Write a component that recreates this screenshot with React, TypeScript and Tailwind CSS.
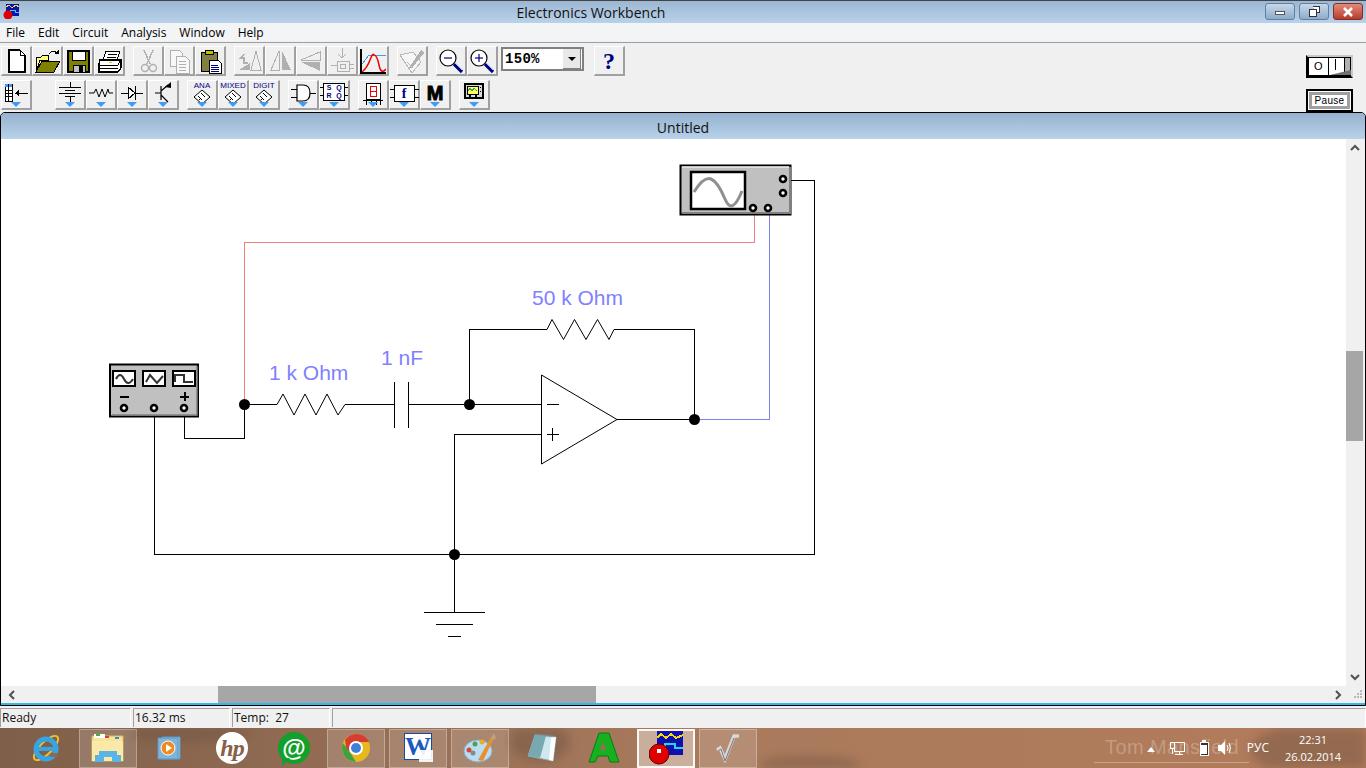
import type { ReactNode } from "react";

const ui = { fontFamily: '"Liberation Sans", Arial, sans-serif' };

function Svg({ children, w = 26, h = 26 }: { children: ReactNode; w?: number; h?: number }) {
  return (
    <svg width={w} height={h} viewBox={`0 0 ${w} ${h}`} shapeRendering="crispEdges" fill="none">
      {children}
    </svg>
  );
}

function Btn({ children, drop = false, cls = "" }: { children: ReactNode; drop?: boolean; cls?: string }) {
  return (
    <div className={`relative w-[31px] h-[30px] shrink-0 bg-[#f0f0f0] border-t border-l border-t-white border-l-white border-r-2 border-b-2 border-r-[#a0a0a0] border-b-[#a0a0a0] flex items-start justify-center pt-[1px] ${cls}`}>
      {children}
      {drop && <div className="absolute bottom-[1px] left-[9px] w-0 h-0 border-l-[5px] border-r-[5px] border-t-[5px] border-l-transparent border-r-transparent border-t-[#3f9bf5]" />}
    </div>
  );
}

const NewIcon = () => (
  <Svg><path d="M6 2H17L22 7V24H6Z" fill="#fff" stroke="#000" strokeWidth="1.4" /><path d="M17 2V7H22" stroke="#000" /></Svg>
);
const OpenIcon = () => (
  <Svg>
    <path d="M2 9H7L9 7H14V12H6L2 24Z" fill="#ffff80" stroke="#000" />
    <path d="M2 24L8 13H26L20 24Z" fill="#808000" stroke="#000" />
    <path d="M15 6Q19 1 23 5" stroke="#000" strokeWidth="1.2" /><path d="M20 6H25V2Z" fill="#000" />
  </Svg>
);
const SaveIcon = () => (
  <Svg>
    <path d="M3 3H24V24H3Z" fill="#808000" stroke="#000" strokeWidth="1.4" />
    <path d="M7 3H20V12H7Z" fill="#fff" stroke="#000" />
    <path d="M8 17H20V24H8Z" fill="#c0c0c0" stroke="#000" /><path d="M14 18H18V24H14Z" fill="#000" />
  </Svg>
);
const PrintIcon = () => (
  <Svg>
    <path d="M10 3H24L21 12H7Z" fill="#fff" stroke="#000" />
    <path d="M12 6H21M11 9H20" stroke="#000" />
    <path d="M4 12H25V20L22 24H3V16Z" fill="#fff" stroke="#000" strokeWidth="1.3" />
    <path d="M3 17H22L25 12M3 20H22" stroke="#000" /><path d="M13 14H16V15H13Z" fill="#d0c020" />
  </Svg>
);
const CutIcon = () => (
  <Svg>
    <path d="M9 2L15 16M18 2L12 16" stroke="#b0b0b0" strokeWidth="1.4" />
    <circle cx="10" cy="20" r="3.5" stroke="#b0b0b0" strokeWidth="1.4" shapeRendering="auto" /><circle cx="18" cy="20" r="3.5" stroke="#b0b0b0" strokeWidth="1.4" shapeRendering="auto" />
  </Svg>
);
const CopyIcon = () => (
  <Svg>
    <path d="M4 2H13L16 5V18H4Z" fill="#f8f8f8" stroke="#b0b0b0" />
    <path d="M10 8H19L23 12V25H10Z" fill="#f8f8f8" stroke="#b0b0b0" />
    <path d="M13 13H20M13 16H20M13 19H20M13 22H20" stroke="#b0b0b0" />
  </Svg>
);
const PasteIcon = () => (
  <Svg>
    <path d="M4 4H20V23H4Z" fill="#808040" stroke="#000" />
    <path d="M8 2H16V6H8Z" fill="#c0c000" stroke="#000" />
    <path d="M12 12H21L24 15V25H12Z" fill="#fff" stroke="#000" />
    <path d="M14 17H21M14 19H22M14 21H22M14 23H22" stroke="#000080" />
  </Svg>
);
const RotIcon = () => (
  <Svg>
    <path d="M3 22L14 15V22Z" fill="#b0b0b0" /><path d="M15 22L20 3L25 22Z" fill="#f0f0f0" stroke="#b0b0b0" />
    <path d="M9 6L5 10H8V15H12" stroke="#b0b0b0" strokeWidth="1.4" />
  </Svg>
);
const FlipHIcon = () => (
  <Svg><path d="M12 3V22H4Z" fill="#f0f0f0" stroke="#b0b0b0" /><path d="M15 3V22H24Z" fill="#b0b0b0" /></Svg>
);
const FlipVIcon = () => (
  <Svg><path d="M22 4V12H3Z" fill="#f0f0f0" stroke="#b0b0b0" /><path d="M22 23V14H3Z" fill="#b0b0b0" /></Svg>
);
const SubIcon = () => (
  <Svg><path d="M13 0V9M9 6L13 10L17 6" stroke="#b0b0b0" /><path d="M2 17H8M8 13H20V23H8ZM20 16H25M20 20H25" stroke="#b0b0b0" /><path d="M11 16H16V20H11Z" stroke="#b0b0b0" /></Svg>
);
const GraphIcon = () => (
  <Svg>
    <path d="M1 1V25H27" stroke="#000" strokeWidth="1.2" />
    <path d="M2 16L9 7H26" stroke="#3f9bf5" />
    <path d="M2 24Q7 20 10 12T14 7Q17 7 19 17T26 21" stroke="#ee0000" strokeWidth="1.5" shapeRendering="auto" />
  </Svg>
);
const TagIcon = () => (
  <Svg>
    <path d="M1 7L14 4L22 14L13 25Z" fill="#f6f6f6" stroke="#b8b8b8" />
    <path d="M10 20L22 2L25 5L13 20Z" fill="#b0b0b0" /><path d="M8 14L14 20" stroke="#b8b8b8" />
  </Svg>
);
const Zoom = ({ plus }: { plus?: boolean }) => (
  <svg width="26" height="26" viewBox="0 0 26 26" fill="none">
    <circle cx="10" cy="10" r="8" fill="#fff" stroke="#000" strokeWidth="1.2" />
    <path d="M6 10H14" stroke="#000080" strokeWidth="1.2" />
    {plus && <path d="M10 6V14" stroke="#000080" strokeWidth="1.2" />}
    <path d="M16 16L24 24" stroke="#000080" strokeWidth="3.2" />
    <path d="M17 15L24 22" stroke="#9fc0ff" strokeWidth="1" />
  </svg>
);
const PartsIcon = () => (
  <Svg w={26} h={22}>
    <path d="M2 2H9V19H2Z" fill="#fff" stroke="#000" />
    <path d="M2 2H9V5H2Z" fill="#3f9bf5" /><path d="M2 8H9M2 11H9M2 14H9M5 2V19" stroke="#000" />
    <path d="M12 11H25" stroke="#000" /><path d="M12 11L16 8V14Z" fill="#000" />
  </Svg>
);
const SourceIcon = () => (
  <Svg w={26} h={22}><path d="M13 0V5M2 5H24M8 8H18M2 11H24M8 14H18M13 14V20" stroke="#000" /></Svg>
);
const ResIcon = () => (
  <svg width="26" height="22" viewBox="0 0 26 22" fill="none"><path d="M1 11H6L8 7L11 15L14 7L17 15L20 7L21 11H25" stroke="#000" /></svg>
);
const DiodeIcon = () => (
  <Svg w={24} h={22}><path d="M1 11H9M16 11H23M15 4V18" stroke="#000" /><path d="M8 5V17L15 11Z" fill="#fff" stroke="#000" /></Svg>
);
const TransIcon = () => (
  <svg width="24" height="22" viewBox="0 0 24 22" fill="none">
    <path d="M4 11H10M10 4V18M10 9L17 3M10 13L17 20" stroke="#000" strokeWidth="1.2" />
    <path d="M14 5L20 0V6Z" fill="#000" />
  </svg>
);
const ChipIcon = ({ label }: { label: string }) => (
  <div className="flex flex-col items-center leading-none">
    <span className="text-[8px] text-[#000080] h-[7px] leading-[7px] whitespace-nowrap" style={ui}>{label}</span>
    <svg width="18" height="16" viewBox="0 0 18 16" fill="none">
      <path d="M9 1L17 8L9 15L1 8Z" fill="#fff" stroke="#000" />
      <path d="M5 7L9 11M8 4L12 8" stroke="#000" /><path d="M6 10H7V11H6Z" fill="#000" />
    </svg>
  </div>
);
const GateIcon = () => (
  <Svg w={28} h={22}><path d="M2 7H8M2 15H8M20 11H27" stroke="#000" /><path d="M8 3H14Q21 3 21 11T14 19H8Z" fill="#fff" stroke="#000" strokeWidth="1.2" shapeRendering="auto" /></Svg>
);
const SrIcon = () => (
  <div className="relative mt-[1px] w-[22px] h-[18px] border border-black bg-white grid grid-cols-2 text-[7px] leading-[8px] text-center font-bold text-[#000080]" style={ui}>
    <span>S</span><span>Q</span><span>R</span><span>Q</span>
    <div className="absolute left-[-4px] top-[3px] w-[3px] h-[1px] bg-black" />
    <div className="absolute left-[-4px] top-[11px] w-[3px] h-[1px] bg-black" />
    <div className="absolute right-[-4px] top-[3px] w-[3px] h-[1px] bg-black" />
    <div className="absolute right-[-4px] top-[11px] w-[3px] h-[1px] bg-black" />
  </div>
);
const SegIcon = () => (
  <Svg w={22} h={24}>
    <path d="M4 1H18V17H4Z" fill="#fff" stroke="#000" />
    <path d="M8 4H14V14H8ZM8 9H14" stroke="#ee0000" />
    <path d="M1 18H21V19H1Z" fill="#000" /><path d="M4 19V23M9 19V23M14 19V23M18 19V23" stroke="#000" />
  </Svg>
);
const FuncIcon = () => (
  <div className="relative mt-[3px] w-[21px] h-[17px] border border-black bg-white flex items-center justify-center">
    <span className="text-[14px] font-bold text-[#000080] leading-none" style={{ fontFamily: '"Liberation Serif", serif' }}>f</span>
    <div className="absolute left-[-5px] top-[3px] w-[4px] h-[1px] bg-black" />
    <div className="absolute right-[-5px] top-[3px] w-[4px] h-[1px] bg-black" />
    <div className="absolute left-[-5px] top-[11px] w-[4px] h-[1px] bg-black" />
    <div className="absolute right-[-5px] top-[11px] w-[4px] h-[1px] bg-black" />
  </div>
);
const ScopeTool = () => (
  <Svg w={20} h={20}>
    <path d="M1 2H19V16H1Z" fill="#d8d8d8" stroke="#000" strokeWidth="1.3" />
    <path d="M3 4H14V12H3Z" fill="#ffff60" stroke="#000" />
    <path d="M4 9L6 6L8 9L10 6L13 9" stroke="#3fa060" />
    <path d="M16 5H17V6H16ZM16 9H17V10H16ZM5 13H7V15H5ZM11 13H13V15H11Z" fill="#000" />
  </Svg>
);

function Toolbar() {
  return (
    <div className="h-[69px] bg-[#f0f0f0] flex justify-between" style={ui}>
      <div className="flex flex-col pt-[3px]">
        <div className="flex items-start pl-[1px] h-[34px]">
          <Btn><NewIcon /></Btn><Btn><OpenIcon /></Btn><Btn><SaveIcon /></Btn><Btn><PrintIcon /></Btn>
          <div className="w-[8px]" />
          <Btn><CutIcon /></Btn><Btn><CopyIcon /></Btn><Btn><PasteIcon /></Btn>
          <div className="w-[8px]" />
          <Btn><RotIcon /></Btn><Btn><FlipHIcon /></Btn><Btn><FlipVIcon /></Btn><Btn><SubIcon /></Btn><Btn><GraphIcon /></Btn>
          <div className="w-[8px]" />
          <Btn><TagIcon /></Btn>
          <div className="w-[8px]" />
          <Btn><Zoom /></Btn><Btn><Zoom plus /></Btn>
          <div className="ml-[3px] mt-[1px] w-[83px] h-[24px] bg-white border-2 border-[#808080] flex justify-between items-center">
            <span className="pl-[2px] text-[14px] font-bold text-black tracking-[0.3px]" style={{ fontFamily: '"Liberation Mono", monospace' }}>150%</span>
            <div className="mr-[1px] w-[18px] h-[20px] bg-[#e8e8e8] border-r border-b border-[#808080] flex items-center justify-center">
              <div className="w-0 h-0 border-l-[4px] border-r-[4px] border-t-[4px] border-l-transparent border-r-transparent border-t-black" />
            </div>
          </div>
          <div className="w-[10px]" />
          <Btn><span className="text-[24px] leading-[26px] font-bold text-[#000080]" style={{ fontFamily: '"Liberation Serif", serif' }}>?</span></Btn>
        </div>
        <div className="flex items-start pl-[1px] h-[32px]">
          <Btn drop><PartsIcon /></Btn>
          <div className="w-[23px]" />
          <Btn drop><SourceIcon /></Btn><Btn drop><ResIcon /></Btn><Btn drop><DiodeIcon /></Btn><Btn drop><TransIcon /></Btn>
          <div className="w-[8px]" />
          <Btn drop><ChipIcon label="ANA" /></Btn><Btn drop><ChipIcon label="MIXED" /></Btn><Btn drop><ChipIcon label="DIGIT" /></Btn>
          <div className="w-[8px]" />
          <Btn drop><GateIcon /></Btn><Btn drop><SrIcon /></Btn>
          <div className="w-[8px]" />
          <Btn drop><SegIcon /></Btn><Btn drop><FuncIcon /></Btn>
          <Btn drop><span className="text-[20px] leading-[22px] font-bold text-black [-webkit-text-stroke:1px_#000]" style={ui}>M</span></Btn>
          <div className="w-[8px]" />
          <Btn drop><ScopeTool /></Btn>
        </div>
      </div>
      <div className="flex flex-col items-end pr-[13px] pt-[12px]">
        <div className="w-[47px] h-[23px] border-2 border-black border-t-[#c8c8c8] border-r-[#c8c8c8] bg-black p-[1px] flex gap-[1px]">
          <div className="w-[19px] bg-white flex items-center justify-center text-[11px] leading-none text-black">O</div>
          <div className="relative w-[22px] bg-white">
            <div className="absolute left-[6px] top-[1px] w-[1px] h-[11px] bg-black" />
            <div className="absolute right-0 top-0 w-[6px] h-full bg-[#b0b0b0] border-l border-black" />
            <svg className="absolute left-0 bottom-0" width="22" height="6" viewBox="0 0 22 6"><path d="M1 6L22 1V6Z" fill="#707070" /></svg>
          </div>
        </div>
        <div className="mt-[11px] w-[47px] h-[23px] border-2 border-black bg-white p-[1px]">
          <div className="h-full border-[3px] border-[#a0a0a0] flex items-center justify-center text-[10px] leading-none text-black tracking-[0.3px]">Pause</div>
        </div>
      </div>
    </div>
  );
}

const Wire = ({ d, c = "#000" }: { d: string; c?: string }) => <path d={d} stroke={c} fill="none" shapeRendering="crispEdges" />;
const Dot = ({ x, y }: { x: number; y: number }) => <circle cx={x} cy={y} r="5.5" fill="#000" />;
const Port = ({ x, y }: { x: number; y: number }) => <circle cx={x} cy={y} r="3" fill="#fff" stroke="#000" strokeWidth="2.6" />;

// the drawing uses page coordinates, viewBox starts where the canvas does
function Circuit() {
  const label = { fontFamily: '"Liberation Sans", Arial, sans-serif', fontSize: 21, fill: "#7f7fff" };
  return (
    <svg className="block shrink-0" width="1344" height="547" viewBox="2 139 1344 547">
      <Wire d="M244.500 404V242.500H754.500V213" c="#f08080" />
      <Wire d="M695 419.500H769.500V213" c="#8080ee" />
      <Wire d="M184.500 416V438.500H244.500V404" />
      <Wire d="M154.500 416V554.500H814.500V180.500H791" />
      <Wire d="M454.500 554V434.500H541M454.500 554V612M424 612.500H485M436 624.500H473M448 636.500H461" />
      <Wire d="M245 404.500H277M345 404.500H394M394.500 382V428M408.500 382V428M408 404.500H541M469.500 404V329.500H547M614 329.500H694.500V419M617 419.500H695" />
      <path d="M277 404.500L283 394L294 415L305 394L316 415L327 394L338 415L345 404.500" stroke="#000" fill="none" />
      <path d="M547 329.500L552 319.500L563.500 339.500L574.500 319.500L586 339.500L597.500 319.500L609 339.500L614 329.500" stroke="#000" fill="none" />
      <path d="M541.500 375L617 419.500L541.500 464Z" fill="#fff" stroke="#000" />
      <path d="M547 404.500H559M547 434.500H559M552.500 428V441" stroke="#000" shapeRendering="crispEdges" />
      <Dot x={244.5} y={404.5} /><Dot x={469.5} y={404.5} /><Dot x={694.5} y={419.5} /><Dot x={454.5} y={554.5} />
      <text x="269" y="380" style={label}>1 k Ohm</text>
      <text x="381" y="365" style={label}>1 nF</text>
      <text x="532" y="305" style={label}>50 k Ohm</text>

      {/* function generator */}
      <rect x="110" y="364.500" width="88" height="52" fill="#c0c0c0" stroke="#000" strokeWidth="2" />
      <path d="M112 415H197V366" stroke="#808080" strokeWidth="1.5" fill="none" />
      <rect x="113" y="371" width="22" height="15" fill="#fff" stroke="#000" strokeWidth="2" />
      <rect x="143" y="371" width="22" height="15" fill="#fff" stroke="#000" strokeWidth="2" />
      <rect x="173" y="371" width="22" height="15" fill="#fff" stroke="#000" strokeWidth="2" />
      <path d="M116 379Q120 371 124 379T133 379" stroke="#333" strokeWidth="2" fill="none" />
      <path d="M146 382L150 375L157 383L163 376" stroke="#333" strokeWidth="2" fill="none" />
      <path d="M175 382V375H184V382H193" stroke="#333" strokeWidth="2" fill="none" />
      <path d="M120 396.500H129M180 396.500H189M184.500 392V401" stroke="#000" strokeWidth="2" shapeRendering="crispEdges" />
      <Port x={124} y={408} /><Port x={154} y={408} /><Port x={184} y={408} />

      {/* oscilloscope */}
      <rect x="680.500" y="165.500" width="110" height="49" fill="#c0c0c0" stroke="#000" strokeWidth="2" />
      <path d="M682 213H790V167" stroke="#808080" strokeWidth="2" fill="none" />
      <path d="M682 167H789" stroke="#e8e8e8" strokeWidth="1.5" />
      <rect x="691" y="172" width="54" height="37" fill="#fff" stroke="#000" strokeWidth="2.5" />
      <path d="M694 192Q704 176 711 179T725 199T742 191" stroke="#909090" strokeWidth="3" fill="none" />
      <Port x={783} y={179} /><Port x={783} y={193} /><Port x={753} y={208} /><Port x={768} y={208} />
    </svg>
  );
}

function Document() {
  return (
    <div className="h-[594px] border border-black rounded-t-[5px] overflow-hidden bg-[#a9c4de]">
      <div className="h-[26px] pt-[2px] bg-gradient-to-b from-[#97b2cf] to-[#b8d2ea] flex items-center justify-center text-[14px] text-[#111]" style={{ fontFamily: '"Open Sans", sans-serif' }}>
        Untitled
      </div>
      <div className="flex h-[547px] pl-[1px] bg-white">
        <Circuit />
        <div className="flex-1 bg-[#f0f0f0] flex flex-col">
          <div className="h-[17px] w-[17px] flex items-center justify-center">
            <svg width="10" height="7" viewBox="0 0 10 7" fill="none"><path d="M1 6L5 2L9 6" stroke="#505050" strokeWidth="2" /></svg>
          </div>
          <div className="mt-[195px] h-[90px] w-[17px] bg-[#a6a6a6]" />
          <div className="flex-1" />
          <div className="h-[17px] w-[17px] flex items-center justify-center">
            <svg width="10" height="7" viewBox="0 0 10 7" fill="none"><path d="M1 1L5 5L9 1" stroke="#505050" strokeWidth="2" /></svg>
          </div>
        </div>
      </div>
      <div className="flex h-[17px] bg-[#f0f0f0] items-stretch">
        <div className="w-[20px] flex items-center justify-center">
          <svg width="7" height="10" viewBox="0 0 7 10" fill="none"><path d="M6 1L2 5L6 9" stroke="#505050" strokeWidth="2" /></svg>
        </div>
        <div className="ml-[197px] w-[378px] bg-[#a6a6a6]" />
        <div className="flex-1" />
        <div className="w-[30px] flex items-center justify-between pr-[2px]">
          <svg width="7" height="10" viewBox="0 0 7 10" fill="none"><path d="M1 1L5 5L1 9" stroke="#505050" strokeWidth="2" /></svg>
          <svg width="9" height="9" viewBox="0 0 9 9" fill="#b8b8b8" shapeRendering="crispEdges"><path d="M6 0H8V2H6ZM3 3H5V5H3ZM6 3H8V5H6ZM0 6H2V8H0ZM3 6H5V8H3ZM6 6H8V8H6Z" /></svg>
        </div>
      </div>
      <div className="h-[2px] bg-[#38b6e8]" />
    </div>
  );
}

function StatusBar() {
  const cell = "h-[19px] border-t border-l border-t-[#a0a0a0] border-l-[#a0a0a0] border-r border-r-white flex items-center pl-[1px] text-[12px] text-[#111] shrink-0";
  return (
    <div className="h-[22px] bg-[#f0f0f0] flex gap-[2px] items-start pt-[2px]" style={{ fontFamily: '"Open Sans", sans-serif' }}>
      <div className={`${cell} w-[131px]`}>Ready</div>
      <div className={`${cell} w-[97px]`}>16.32 ms</div>
      <div className={`${cell} w-[98px]`}>Temp:&nbsp; 27</div>
      <div className={`${cell} flex-1`} />
    </div>
  );
}

const IeIcon = () => (
  <svg width="34" height="34" viewBox="0 0 34 34" fill="none">
    <ellipse cx="17" cy="17" rx="16" ry="6" transform="rotate(-45 17 17)" stroke="#f0c030" strokeWidth="2" />
    <circle cx="17" cy="18" r="10" stroke="#35a5e5" strokeWidth="5" />
    <path d="M8 18H27" stroke="#35a5e5" strokeWidth="4" /><path d="M21 24H29" stroke="#8b6a52" strokeWidth="4" />
  </svg>
);
const FolderIcon = () => (
  <svg width="34" height="30" viewBox="0 0 34 30" fill="none">
    <path d="M1 3H32V28H1Z" fill="#f6e49c" stroke="#d8b860" />
    <path d="M3 1H14V5H3Z" fill="#fff" /><path d="M5 1H9V3H5Z" fill="#40b040" /><path d="M14 3H18V5H14Z" fill="#d04040" /><path d="M24 4H28V6H24Z" fill="#3090d0" />
    <path d="M1 8H32V28H1Z" fill="#fbe9a8" />
    <path d="M8 22V18H26V22H30V29H21V24H13V29H4V22Z" fill="#5ab4e6" />
  </svg>
);
const WmpIcon = () => (
  <svg width="28" height="26" viewBox="0 0 28 26" fill="none">
    <path d="M6 2H24V24H6Z" fill="#8fc4e8" stroke="#5d97c6" />
    <path d="M2 3H22V24H2Z" fill="#7fb4dc" stroke="#5d97c6" />
    <circle cx="12" cy="13" r="7" fill="#f08a1d" stroke="#fff" strokeWidth="1" />
    <path d="M10 9L16 13L10 17Z" fill="#fff" />
  </svg>
);
const HpIcon = () => (
  <div className="w-[32px] h-[32px] rounded-full bg-white flex items-center justify-center overflow-hidden">
    <span className="text-[24px] italic font-bold leading-none text-[#8a6048] tracking-[-1px]" style={{ fontFamily: '"Liberation Serif", serif' }}>hp</span>
  </div>
);
const MailIcon = () => (
  <div className="relative w-[32px] h-[32px] rounded-full bg-[#12a02a] flex items-center justify-center">
    <span className="text-[24px] font-bold leading-none text-white" style={ui}>@</span>
    <div className="absolute bottom-[-2px] left-[4px] w-0 h-0 border-t-[8px] border-r-[8px] border-t-[#12a02a] border-r-transparent" />
  </div>
);
const ChromeIcon = () => (
  <svg width="30" height="30" viewBox="0 0 30 30">
    <circle cx="15" cy="15" r="14" fill="#e8b820" />
    <path d="M15 1A14 14 0 0 1 28 9H15L6 20L4 7A14 14 0 0 1 15 1Z" fill="#d83c30" />
    <path d="M2 10L10 21L15 29A14 14 0 0 1 2 10Z" fill="#3fa044" />
    <circle cx="15" cy="15" r="7" fill="#fff" /><circle cx="15" cy="15" r="5" fill="#3f7fd8" />
  </svg>
);
const WordIcon = () => (
  <div className="relative w-[30px] h-[32px]">
    <div className="absolute left-[1px] top-[1px] w-[28px] h-[27px] bg-white border border-[#1a4aa0] flex justify-center">
      <span className="text-[26px] font-bold leading-[26px] text-[#1a5ac0]" style={{ fontFamily: '"Liberation Serif", serif' }}>W</span>
    </div>
    <div className="absolute right-0 bottom-[2px] w-[14px] h-[12px] bg-white/90" />
  </div>
);
const PaintIcon = () => (
  <svg width="34" height="32" viewBox="0 0 34 32">
    <ellipse cx="15" cy="19" rx="14" ry="11" fill="#bcdcf0" stroke="#7fb0d0" />
    <circle cx="6" cy="18" r="2.5" fill="#d04a3a" /><circle cx="12" cy="12" r="2.5" fill="#50a050" /><circle cx="19" cy="10" r="2.5" fill="#e8b020" /><circle cx="10" cy="21" r="2.5" fill="#888" />
    <path d="M15 28L27 7L30 8L20 29Z" fill="#e89030" /><path d="M27 7L31 1L33 6L30 8Z" fill="#c8a070" />
  </svg>
);
const NoteIcon = () => (
  <svg width="32" height="32" viewBox="0 0 32 32">
    <path d="M9 3L30 5L27 29L2 24Z" fill="#cfe8f0" stroke="#90a8b0" />
    <path d="M2 24L9 3L20 4L14 26Z" fill="#78a8b0" />
    <path d="M25 6L30 5L27 29L23 28Z" fill="#fff" />
    <path d="M9 2L29 4" stroke="#7a8a90" strokeWidth="2" strokeDasharray="1 1" />
  </svg>
);
const AIcon = () => (
  <svg width="32" height="34" viewBox="0 0 32 34">
    <path d="M11 2H21L31 31H22L20 25H10L7 31H1Z" fill="#16b020" stroke="#0a7a14" />
    <path d="M15 10L12 19H18Z" fill="#9a6c50" />
  </svg>
);
const EwbIcon = () => (
  <svg width="34" height="36" viewBox="0 0 34 36" shapeRendering="crispEdges">
    <rect x="8" y="1" width="26" height="24" fill="#1010b0" />
    <path d="M8 8L12 4L17 8L22 4L27 8L34 5" stroke="#f0e000" strokeWidth="2" fill="none" />
    <path d="M16 18V14H26V18H34" stroke="#20d8e8" strokeWidth="2" fill="none" />
    <circle cx="10" cy="24" r="10" fill="#e00000" shapeRendering="auto" stroke="#600000" />
    <rect x="8" y="19" width="4" height="4" fill="#fff" />
  </svg>
);
const SqrtIcon = () => (
  <svg width="26" height="30" viewBox="0 0 26 30" fill="none"><path d="M2 17L5 15L10 26L19 3H24" stroke="#d8d8d8" strokeWidth="3.5" /><path d="M3 18L6 16L10 28L19 5" stroke="#777" strokeWidth="1" /></svg>
);

function Slot({ children, box, active }: { children: ReactNode; box?: boolean; active?: boolean }) {
  const look = active ? "border-2 border-white/90 bg-white/40" : box ? "border border-white/30 bg-white/15" : "";
  return <div className={`w-[58px] h-[39px] flex items-center justify-center shrink-0 ${look}`}>{children}</div>;
}

function Taskbar() {
  return (
    <div className="relative h-[40px] bg-gradient-to-r from-[#7f5f4a] via-[#a87a5c] to-[#b37c5b] overflow-hidden flex items-center gap-[4px] pl-[17px] text-white" style={{ fontFamily: '"Open Sans", sans-serif' }}>
      <svg className="absolute left-0 top-0 blur-[5px]" width="1366" height="40" viewBox="0 0 1366 40" fill="#6f5443" opacity="0.45">
        <ellipse cx="190" cy="6" rx="60" ry="8" /><ellipse cx="540" cy="14" rx="30" ry="20" /><ellipse cx="810" cy="36" rx="50" ry="8" /><ellipse cx="1320" cy="22" rx="70" ry="26" />
      </svg>
      <Slot><span className="relative"><IeIcon /></span></Slot>
      <Slot box><span className="relative"><FolderIcon /></span></Slot>
      <Slot><span className="relative"><WmpIcon /></span></Slot>
      <Slot><span className="relative"><HpIcon /></span></Slot>
      <Slot><span className="relative"><MailIcon /></span></Slot>
      <Slot box><span className="relative"><ChromeIcon /></span></Slot>
      <Slot box><span className="relative"><WordIcon /></span></Slot>
      <Slot box><span className="relative"><PaintIcon /></span></Slot>
      <Slot><span className="relative"><NoteIcon /></span></Slot>
      <Slot><span className="relative"><AIcon /></span></Slot>
      <Slot active><span className="relative"><EwbIcon /></span></Slot>
      <Slot box><span className="relative"><SqrtIcon /></span></Slot>

      {/* watermark of the wallpaper */}
      <div className="absolute left-[1105px] top-[4px] text-[20px] tracking-[0.4px] text-white/25 whitespace-nowrap" style={ui}>Tom Mansfield</div>
      <div className="absolute left-[1094px] top-[34px] w-[155px] h-[1px] bg-white/30" />

      <div className="ml-auto relative flex items-center h-full text-[12px]">
        <div className="w-0 h-0 border-l-[4px] border-r-[4px] border-b-[5px] border-l-transparent border-r-transparent border-b-white mr-[14px] mt-[3px]" />
        <svg width="16" height="15" viewBox="0 0 16 15" fill="none" className="mr-[14px]" shapeRendering="crispEdges">
          <path d="M5 1H15V10H5Z" stroke="#fff" /><path d="M1 1H5V7H1ZM10 10V13M6 13.500H14M3 7V13" stroke="#fff" />
        </svg>
        <svg width="10" height="16" viewBox="0 0 10 16" fill="none" className="mr-[8px]" shapeRendering="crispEdges">
          <path d="M1 2H9V15H1Z" stroke="#fff" fill="#40302a" /><path d="M3 0H7V2H3Z" fill="#fff" /><path d="M2 5H8V14H2Z" fill="#fff" />
        </svg>
        <svg width="15" height="16" viewBox="0 0 15 16" fill="none" className="mr-[15px]">
          <path d="M1 5H4L8 1V15L4 11H1Z" fill="#fff" /><path d="M10 5Q12 8 10 11M12 3Q15 8 12 13" stroke="#fff" />
        </svg>
        <span className="mr-[8px] text-[12px]">РУС</span>
        <div className="w-[72px] mr-[17px] flex flex-col items-center leading-[17px] text-[11px]">
          <span>22:31</span>
          <span>26.02.2014</span>
        </div>
      </div>
    </div>
  );
}

export default function App() {
  return (
    <div className="w-[1366px] h-[768px] overflow-hidden bg-[#f0f0f0] flex flex-col">
      <div className="h-[23px] pr-[184px] bg-gradient-to-b from-[#9db7d3] to-[#b9d2ea] border-t border-[#444] relative flex items-center justify-center text-[14px] text-[#111]" style={{ fontFamily: '"Open Sans", sans-serif' }}>
        <div className="absolute left-[2px] top-[2px]">
          <svg width="17" height="16" viewBox="0 0 17 16" shapeRendering="crispEdges">
            <rect x="4" y="1" width="13" height="12" fill="#1010b0" />
            <path d="M4 4L7 2L10 5L14 2L17 4" stroke="#f0e000" fill="none" />
            <path d="M8 9V7H13V9H17" stroke="#20d8e8" fill="none" />
            <circle cx="6" cy="12" r="4.500" fill="#e00000" shapeRendering="auto" />
          </svg>
        </div>
        Electronics Workbench
        <div className="absolute right-[3px] top-[2px] flex gap-[4px]">
          <div className="w-[30px] h-[17px] rounded-[3px] border border-[#5f7fa5] bg-gradient-to-b from-[#c6d8ea] to-[#8fabc8] flex items-center justify-center">
            <div className="w-[10px] h-[4px] mt-[3px] bg-white border border-[#555]" />
          </div>
          <div className="w-[30px] h-[17px] rounded-[3px] border border-[#5f7fa5] bg-gradient-to-b from-[#c6d8ea] to-[#8fabc8] flex items-center justify-center">
            <svg width="11" height="11" viewBox="0 0 11 11" shapeRendering="crispEdges" fill="none"><path d="M3.500 .5H10.500V6.500H8M.5 3.500H7.500V10.500H.5Z" stroke="#333" fill="#fff" /></svg>
          </div>
          <div className="w-[30px] h-[17px] rounded-[3px] border border-[#7a3030] bg-gradient-to-b from-[#e28a78] to-[#b83a2a] flex items-center justify-center">
            <svg width="12" height="10" viewBox="0 0 12 10" fill="none"><path d="M2 1L10 9M10 1L2 9" stroke="#fff" strokeWidth="2.6" /></svg>
          </div>
        </div>
      </div>
      <div className="h-[18px] pt-[1px] bg-[#f3f4f6] flex items-center gap-[13px] pl-[6px] text-[12px] text-black" style={{ fontFamily: '"Open Sans", sans-serif' }}>
        <span>File</span><span>Edit</span><span>Circuit</span><span>Analysis</span><span>Window</span><span>Help</span>
      </div>
      <div className="h-[1px] mt-[1px] bg-[#a0a0a0]" />
      <Toolbar />
      <Document />
      <StatusBar />
      <Taskbar />
    </div>
  );
}
